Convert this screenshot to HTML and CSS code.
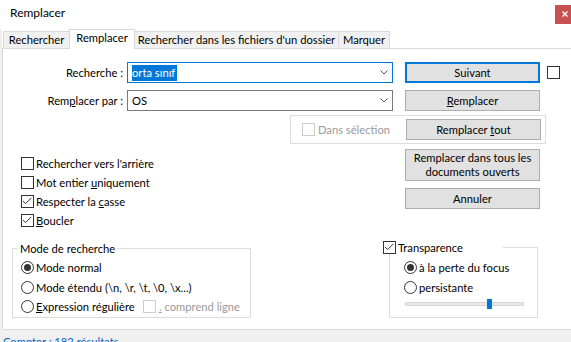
FILE: index.html
```html
<!DOCTYPE html>
<html lang="fr">
<head>
  <meta charset="UTF-8">
  <meta name="viewport" content="width=device-width, initial-scale=1.0">
  <title>Remplacer</title>
  <link rel="stylesheet" href="styles.css">
</head>
<body>
  <div class="window">
    <header class="titlebar">
      <span class="title">Remplacer</span>
      <button class="close" aria-label="Fermer">
        <svg width="6" height="6" viewBox="0 0 6 6"><path d="M0.5 0.5 5.5 5.5 M5.5 0.5 0.5 5.5" stroke="#fff" stroke-width="1.4"/></svg>
      </button>
    </header>
    <div class="frame">
      <nav class="tabs">
        <span class="tab tab-find">Rechercher</span>
        <span class="tab tab-replace active">Remplacer</span>
        <span class="tab tab-files">Rechercher dans les fichiers d'un dossier</span>
        <span class="tab tab-mark">Marquer</span>
      </nav>
      <main class="panel">
        <div class="field-row">
          <label class="field-label">Recherche :</label>
          <div class="combo focused">
            <span class="combo-value"><span class="selected">orta sınıf</span></span>
            <svg class="chevron" width="8" height="5" viewBox="0 0 8 5"><path d="M0.5 0.5 4 4 7.5 0.5" fill="none" stroke="#555" stroke-width="1"/></svg>
          </div>
          <button class="btn default">Suivant</button>
          <span class="box solo"></span>
        </div>
        <div class="field-row">
          <label class="field-label">Rem<u>p</u>lacer par :</label>
          <div class="combo">
            <span class="combo-value">OS</span>
            <svg class="chevron" width="8" height="5" viewBox="0 0 8 5"><path d="M0.5 0.5 4 4 7.5 0.5" fill="none" stroke="#555" stroke-width="1"/></svg>
          </div>
          <button class="btn"><u>R</u>emplacer</button>
        </div>

        <div class="selection-group">
          <label class="option disabled"><span class="box"></span><span>Dans sélection</span></label>
          <button class="btn">Remplacer <u>t</u>out</button>
        </div>

        <div class="options">
          <div class="option-list">
            <label class="option"><span class="box"></span><span>Rechercher vers l'arrière</span></label>
            <label class="option"><span class="box"></span><span>Mot entier <u>u</u>niquement</span></label>
            <label class="option"><span class="box"><svg width="11" height="11" viewBox="0 0 11 11"><path d="M1 5 3.6 7.6 9.2 2" fill="none" stroke="#333" stroke-width="1"/></svg></span><span>Respecter la <u>c</u>asse</span></label>
            <label class="option"><span class="box"><svg width="11" height="11" viewBox="0 0 11 11"><path d="M1 5 3.6 7.6 9.2 2" fill="none" stroke="#333" stroke-width="1"/></svg></span><span><u>B</u>oucler</span></label>
          </div>
          <div class="actions">
            <button class="btn tall">Remplacer dans tous les<br>documents ouverts</button>
            <button class="btn">Annuler</button>
          </div>
        </div>

        <div class="modes">
          <fieldset class="group search-mode">
            <legend>Mode de recherche</legend>
            <label class="option"><span class="box radio on"></span><span>Mode normal</span></label>
            <label class="option"><span class="box radio"></span><span>Mode étendu (\n, \r, \t, \0, \x...)</span></label>
            <div class="option regex">
              <label class="option regex-mode"><span class="box radio"></span><span><u>E</u>xpression régulière</span></label>
              <label class="option disabled dotall"><span class="box"></span><span><u>.</u> comprend ligne nouvelle</span></label>
            </div>
          </fieldset>
          <fieldset class="group transparency">
            <legend><label class="option"><span class="box"><svg width="11" height="11" viewBox="0 0 11 11"><path d="M1 5 3.6 7.6 9.2 2" fill="none" stroke="#333" stroke-width="1"/></svg></span><span>Transparence</span></label></legend>
            <label class="option"><span class="box radio on"></span><span>à la perte du focus</span></label>
            <label class="option"><span class="box radio"></span><span>persistante</span></label>
            <div class="slider">
              <span class="slider-track"></span>
              <span class="slider-thumb"></span>
            </div>
          </fieldset>
        </div>
      </main>
      <footer class="status">Compter : 182 résultats</footer>
    </div>
  </div>
</body>
</html>
```

FILE: styles.css
```css
:root {
  --accent: #0078d7;
  --border-light: #d9d9d9;
  --button-face: #e1e1e1;
  --disabled-text: #9a9a9a;
}
* {
  box-sizing: border-box;
}
body {
  margin: 0;
  font-family: Lato, "Noto Sans", sans-serif;
  font-size: 11.2px;
  line-height: 15px;
  color: #000;
  background-color: #fff;
  overflow: hidden;
}
u {
  text-underline-offset: 1px;
}
.window {
  display: flex;
  flex-direction: column;
  width: 571px;
  height: 342px;
}
.titlebar {
  display: flex;
  justify-content: space-between;
  align-items: flex-start;
  height: 29px;
  padding: 5px 0 0 10px;
}
.title {
  font-size: 12px;
}
.close {
  display: flex;
  align-items: center;
  justify-content: center;
  width: 16px;
  height: 19px;
  padding: 0 0 2px 3px;
  border: none;
  background-color: #c75050;
}
.frame {
  display: flex;
  flex-direction: column;
  flex: 1;
  border-left: 2px solid #f0f0f0;
}
.tabs {
  display: flex;
  align-items: flex-end;
  height: 19px;
  padding-left: 1px;
}
.tab {
  height: 17px;
  line-height: 16px;
  text-align: center;
  white-space: nowrap;
  border: 1px solid var(--border-light);
  border-bottom: none;
  background-color: #f0f0f0;
  margin-right: -1px;
}
.tab.active {
  position: relative;
  z-index: 1;
  height: 20px;
  margin-bottom: -1px;
  line-height: 16px;
  background-color: #fff;
}
.tab-find { width: 67px; }
.tab-replace { width: 66px; }
.tab-files { width: 205px; }
.tab-mark { width: 52px; }
.panel {
  flex: 1;
  padding-top: 13px;
  border-top: 1px solid var(--border-light);
  border-left: 1px solid var(--border-light);
  background-color: #fff;
}
.field-row {
  display: flex;
  align-items: center;
  height: 21px;
}
.field-row + .field-row {
  margin-top: 7px;
}
.field-label {
  width: 120px;
  text-align: right;
}
.combo {
  display: flex;
  align-items: center;
  width: 266px;
  height: 21px;
  margin-left: 4px;
  padding: 0 4px 0 4px;
  border: 1px solid #7a7a7a;
}
.combo.focused {
  border-color: var(--accent);
}
.combo-value {
  flex: 1;
}
.selected {
  display: inline-block;
  padding-right: 2px;
  line-height: 16px;
  color: #fff;
  background-color: var(--accent);
}
.chevron {
  margin-bottom: 1px;
}
.btn {
  width: 135px;
  height: 21px;
  padding: 0;
  font: inherit;
  color: #000;
  border: 1px solid #adadad;
  background-color: var(--button-face);
}
.btn.default {
  border: 2px solid var(--accent);
}
.field-row .btn {
  margin-left: 12px;
}
.btn.tall {
  height: 32px;
  line-height: 14px;
}
.box {
  display: flex;
  align-items: center;
  justify-content: center;
  flex: none;
  width: 13px;
  height: 13px;
  margin-right: 2px;
  border: 1px solid #333;
  background-color: #fff;
}
.box.solo {
  margin-left: 7px;
}
.box.radio {
  border-radius: 50%;
}
.box.radio.on::after {
  content: '';
  width: 7px;
  height: 7px;
  border-radius: 50%;
  background-color: #333;
}
.option {
  display: flex;
  align-items: center;
  white-space: nowrap;
}
.option.disabled {
  color: var(--disabled-text);
}
.option.disabled .box {
  border-color: #ccc;
}
.selection-group {
  display: flex;
  align-items: center;
  width: 256px;
  height: 29px;
  margin: 4px 0 0 287px;
  padding-left: 11px;
  border: 1px solid #dcdcdc;
}
.selection-group .option .box {
  margin-right: 3px;
}
.selection-group .btn {
  align-self: flex-start;
  margin: 3px 4px 0 auto;
}
.options {
  display: flex;
  margin-top: 5px;
}
.option-list {
  width: 402px;
  padding: 5px 0 0 18px;
}
.option-list .option {
  height: 19px;
}
.actions {
  display: flex;
  flex-direction: column;
  gap: 7px;
}
.modes {
  display: grid;
  grid-template-columns: 239px 149px;
  column-gap: 138px;
  align-items: start;
  margin-top: 11px;
  padding-left: 9px;
}
.group {
  min-width: 0;
  margin: 0;
  border: 1px solid #dcdcdc;
}
.group legend {
  padding: 0 2px;
}
.group .option {
  height: 19.5px;
}
.search-mode {
  padding: 2px 0 0 8px;
}
.search-mode legend {
  margin-left: -3px;
}
.regex {
  display: flex;
}
.regex-mode {
  width: 122px;
}
.dotall {
  width: 100px;
  overflow: hidden;
}
.dotall .box {
  margin-right: 3px;
}
.transparency {
  padding: 4px 0 8px 14px;
}
.transparency legend {
  width: 120px;
  height: 13px;
  margin-left: -21px;
  padding: 0;
}
.transparency legend .option {
  height: 13px;
}
.slider {
  position: relative;
  width: 119px;
  height: 10px;
  margin: 2px 0 0 1px;
}
.slider-track {
  position: absolute;
  left: 0;
  right: 0;
  top: 3px;
  height: 4px;
  border: 1px solid #d6d6d6;
  background-color: #e7e7e7;
}
.slider-thumb {
  position: absolute;
  left: 82px;
  top: 0;
  width: 5px;
  height: 10px;
  background-color: var(--accent);
}
.status {
  height: 13px;
  padding: 4px 0 0 1px;
  overflow: hidden;
  color: #1060c0;
  border-top: 1px solid var(--border-light);
  background-color: #f0f0f0;
}
```
